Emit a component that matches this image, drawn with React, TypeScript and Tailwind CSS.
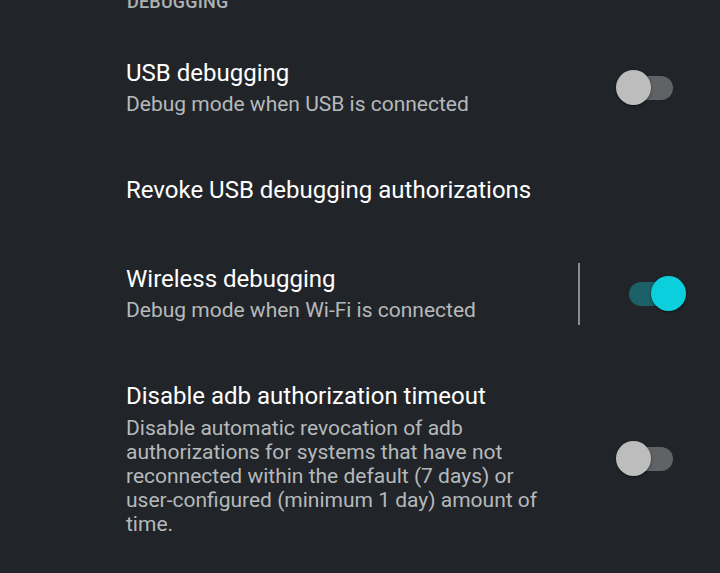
import React from "react";

function Switch({ on }: { on: boolean }) {
  return (
    <div className="relative w-[70px] h-[36px] shrink-0">
      <div
        className={
          "absolute left-[13px] top-[6px] w-[44px] h-[24px] rounded-full " +
          (on ? "bg-[#1b6167]" : "bg-[#5f6366]")
        }
      />
      <div
        className={
          "absolute top-0 w-[35px] h-[35px] rounded-full shadow-[0_1px_3px_rgba(0,0,0,0.45)] " +
          (on ? "left-[35px] bg-[#0ccfdd]" : "left-0 bg-[#bdbdbd]")
        }
      />
    </div>
  );
}

function Row({
  title,
  lines,
  toggle,
  divider,
  py = "py-[30px]",
  sub = "mt-[5px]",
}: {
  title: string;
  lines?: string;
  toggle?: boolean | null;
  divider?: boolean;
  py?: string;
  sub?: string;
}) {
  return (
    <div className={"flex items-center pl-[126px] " + py}>
      <div className="flex-1 min-w-0 mr-[28px]">
        <div className="text-[24px] leading-[28px] text-[#ffffff]">{title}</div>
        {lines && (
          <div className={"text-[21px] leading-[24px] text-[#b6b9bb] " + sub}>{lines}</div>
        )}
      </div>
      <div className="w-[142px] shrink-0 flex items-center">
        {divider ? (
          <div className="w-[2px] h-[62px] my-[-3px] bg-[#8b8e91]" />
        ) : (
          <div className="w-[2px]" />
        )}
        <div className="w-[36px]" />
        {toggle !== undefined && toggle !== null ? <Switch on={toggle} /> : <div className="w-[70px]" />}
      </div>
    </div>
  );
}

export default function App() {
  return (
    <div
      className="w-[720px] h-[573px] overflow-hidden bg-[#212529]"
      style={{ fontFamily: "Roboto, 'Noto Sans', sans-serif" }}
    >
      <div className="mt-[-10px] pl-[127px] text-[18px] leading-[24px] font-medium tracking-[0.2px] text-[#aeb1b3]">
        DEBUGGING
      </div>
      <div className="mt-[15px]">
        <Row title="USB debugging" lines="Debug mode when USB is connected" toggle={false} />
        <Row title="Revoke USB debugging authorizations" py="pt-[30px] pb-[31px]" toggle={null} />
        <Row
          title="Wireless debugging"
          lines="Debug mode when Wi‑Fi is connected"
          toggle={true}
          divider
        />
        <Row
          title="Disable adb authorization timeout"
          lines="Disable automatic revocation of adb authorizations for systems that have not reconnected within the default (7 days) or user-configured (minimum 1 day) amount of time."
          toggle={false}
          sub="mt-[6px]"
        />
      </div>
    </div>
  );
}
